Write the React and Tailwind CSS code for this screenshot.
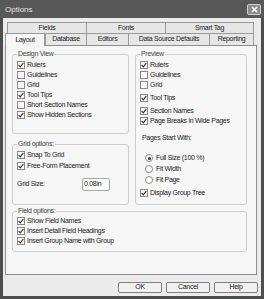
import React from "react";

const Check = ({ checked }) => (
  <span className="w-[8px] h-[8px] border border-[#8a8a8a] bg-white flex items-center justify-center shrink-0">
    {checked && (
      <svg width="6" height="6" viewBox="0 0 6 6">
        <path d="M0.6 3 L2.3 4.8 L5.4 0.9" fill="none" stroke="#333" strokeWidth="1.1" />
      </svg>
    )}
  </span>
);

const Row = ({ checked, label, className = "" }) => (
  <div className={"h-[10px] flex items-center gap-[2px] " + className}>
    <Check checked={checked} />
    <span className="whitespace-nowrap">{label}</span>
  </div>
);

const Radio = ({ checked, label, className = "" }) => (
  <div className={"h-[10px] flex items-center gap-[3px] pl-[5px] " + className}>
    <span className="w-[8px] h-[8px] rounded-full border border-[#8a8a8a] bg-white flex items-center justify-center shrink-0">
      {checked && <span className="w-[3px] h-[3px] rounded-full bg-[#333]" />}
    </span>
    <span className="whitespace-nowrap">{label}</span>
  </div>
);

const Group = ({ title, className = "", children }) => (
  <fieldset className={"border border-[#cdcdcd] rounded-[3px] px-[4px] " + className}>
    <legend className="px-[1px] leading-[8px] text-[#444]">{title}</legend>
    {children}
  </fieldset>
);

const Tab = ({ label, w, last }) => (
  <div
    className={
      "h-full flex items-center justify-center border-t border-l border-[#9a9a9a] bg-[#e6e6e6] " +
      (last ? "border-r " : "") +
      w
    }
  >
    {label}
  </div>
);

const Btn = ({ label }) => (
  <div className="w-[44px] h-[11px] border border-[#7f7f7f] rounded-[2px] bg-[#f1f1f1] flex items-center justify-center">
    {label}
  </div>
);

export default function App() {
  return (
    <div
      className="w-[264px] h-[299px] bg-[#4e4e4e] flex flex-col overflow-hidden text-[7px] tracking-[-0.3px] text-[#222]"
      style={{ fontFamily: '"Liberation Sans", Arial, sans-serif' }}
    >
      <div className="h-[18px] shrink-0 flex items-start justify-between pl-[5px] pr-[3px] bg-[#585858]">
        <span className="mt-[4px] text-[8px] tracking-normal leading-[12px] text-[#e4e4e4]">Options</span>
        <div className="mt-[4px] w-[14px] h-[11px] border border-[#d0d0d0] rounded-[2px] bg-[#8c8c8c] flex items-center justify-center">
          <svg width="7" height="7" viewBox="0 0 7 7">
            <path d="M1 1 L6 6 M6 1 L1 6" stroke="#fff" strokeWidth="1.6" />
          </svg>
        </div>
      </div>
      <div className="flex-1 mx-[3px] mb-[3px] bg-[#ebebeb] flex flex-col">
        <div className="mt-[4px] ml-[4px] h-[11px] flex">
          <Tab label="Fields" w="w-[79px]" />
          <Tab label="Fonts" w="w-[79px]" />
          <Tab label="Smart Tag" w="w-[89px]" last />
        </div>
        <div className="ml-[2px] h-[12px] flex items-end">
          <div className="relative z-10 w-[40px] h-[13px] -mb-[1px] flex items-center justify-center border-t border-l border-r border-[#9a9a9a] bg-[#f6f6f6]">
            Layout
          </div>
          <Tab label="Database" w="w-[41px]" />
          <Tab label="Editors" w="w-[42px]" />
          <Tab label="Data Source Defaults" w="w-[81px]" />
          <Tab label="Reporting" w="w-[45px]" last />
        </div>
        <div className="ml-[2px] w-[252px] h-[230px] bg-[#f6f6f6] border border-[#8e8e8e] pl-[6px] pt-[4px] flex flex-col gap-[2px]">
          <div className="flex gap-[6px]">
            <div className="flex flex-col gap-[6px]">
              <Group title="Design View" className="w-[117px] h-[84px]">
                <div className="pt-[2px]">
                  <Row checked label="Rulers" />
                  <Row label="Guidelines" />
                  <Row label="Grid" />
                  <Row checked label="Tool Tips" />
                  <Row label="Short Section Names" />
                  <Row checked label="Show Hidden Sections" />
                </div>
              </Group>
              <Group title="Grid options:" className="w-[117px] h-[65px]">
                <div className="pt-[2px]">
                  <Row checked label="Snap To Grid" />
                  <Row checked label="Free-Form Placement" className="mt-[1px]" />
                  <div className="mt-[7px] h-[13px] flex items-center">
                    <span className="w-[65px]">Grid Size:</span>
                    <div className="w-[28px] h-[13px] border border-[#a9a9a9] rounded-[2px] bg-white pl-[1px] leading-[9px]">
                      0.08in
                    </div>
                  </div>
                </div>
              </Group>
            </div>
            <Group title="Preview" className="w-[112px] h-[155px]">
              <div className="pt-[2px]">
                <Row checked label="Rulers" />
                <Row label="Guidelines" />
                <Row label="Grid" />
                <Row checked label="Tool Tips" className="mt-[3px]" />
                <Row checked label="Section Names" className="mt-[3px]" />
                <Row checked label="Page Breaks in Wide Pages" />
                <div className="mt-[7px] h-[10px] flex items-center pl-[2px]">Pages Start With:</div>
                <Radio checked label="Full Size (100 %)" className="mt-[10px]" />
                <Radio label="Fit Width" className="mt-[1px]" />
                <Radio label="Fit Page" className="mt-[1px]" />
                <Row checked label="Display Group Tree" className="mt-[3px]" />
              </div>
            </Group>
          </div>
          <Group title="Field options:" className="w-[235px] h-[45px]">
            <div className="pt-[1px]">
              <Row checked label="Show Field Names" />
              <Row checked label="Insert Detail Field Headings" />
              <Row checked label="Insert Group Name with Group" />
            </div>
          </Group>
        </div>
        <div className="mt-[7px] pr-[3px] flex justify-end gap-[4px]">
          <Btn label="OK" />
          <Btn label="Cancel" />
          <Btn label="Help" />
        </div>
      </div>
    </div>
  );
}
